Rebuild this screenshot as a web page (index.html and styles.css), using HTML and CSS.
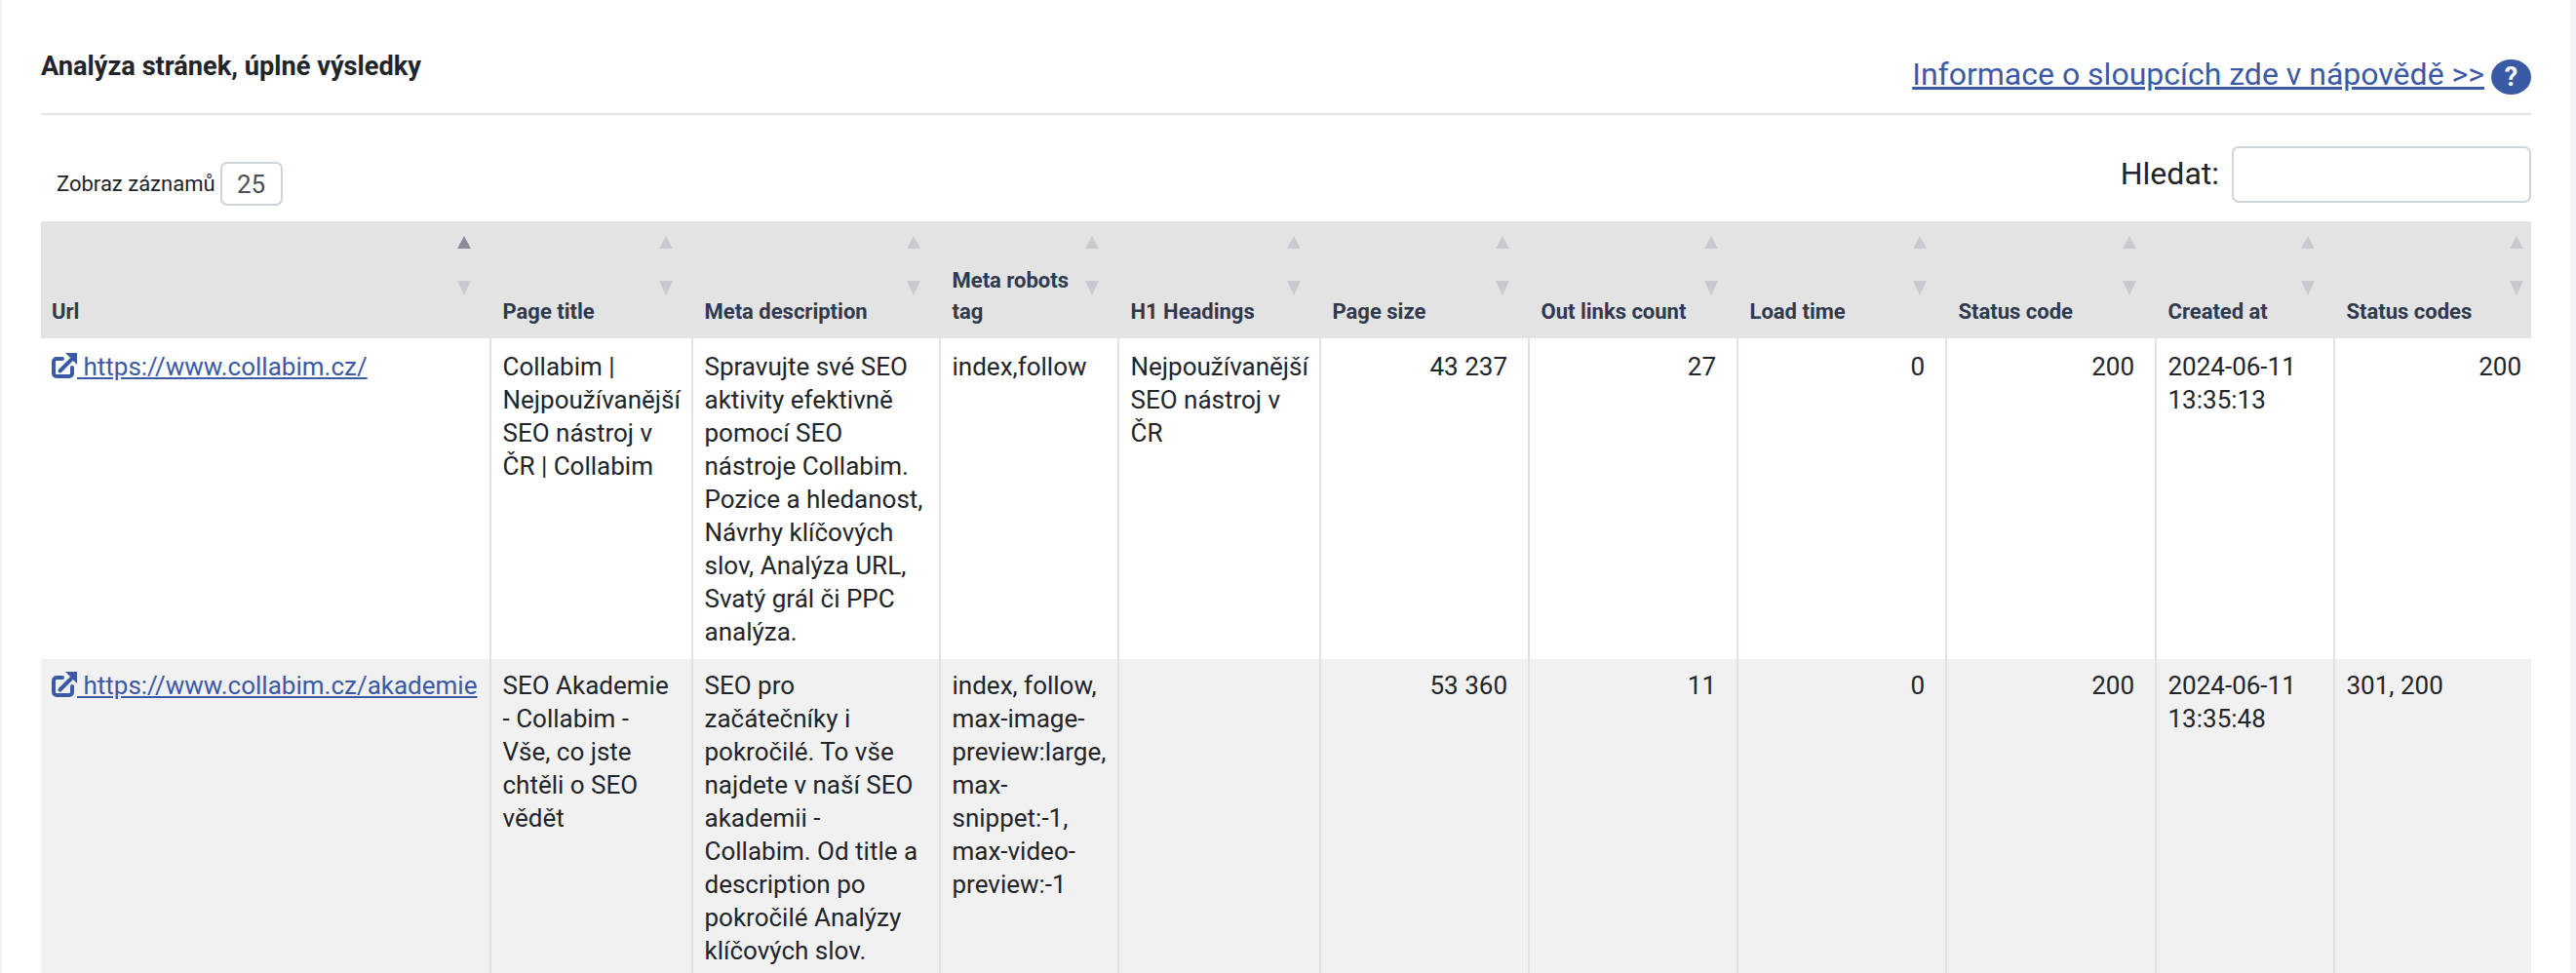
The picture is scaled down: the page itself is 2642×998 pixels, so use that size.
FILE: index.html
```html
<!DOCTYPE html>
<html lang="cs">
<head>
<meta charset="utf-8">
<title>Analýza stránek, úplné výsledky</title>
<link rel="stylesheet" href="styles.css">
</head>
<body>
<main class="card">
  <header class="head">
    <h1 class="title">Analýza stránek, úplné výsledky</h1>
    <div class="help">
      <a class="help-link" href="#">Informace o sloupcích zde v nápovědě &gt;&gt;</a>
      <span class="help-badge">?</span>
    </div>
  </header>
  <div class="toolbar">
    <label class="length">Zobraz záznamů <span class="length-box">25</span></label>
    <label class="search"><span class="search-label">Hledat:</span> <input class="search-input" type="text"></label>
  </div>
  <table class="grid">
    <colgroup>
      <col class="c-url"><col class="c-title"><col class="c-desc"><col class="c-robots"><col class="c-h1"><col class="c-size"><col class="c-size"><col class="c-size"><col class="c-status"><col class="c-robots"><col class="c-codes">
    </colgroup>
    <thead>
      <tr>
        <th class="active">Url</th>
        <th>Page title</th>
        <th>Meta description</th>
        <th>Meta robots tag</th>
        <th>H1 Headings</th>
        <th>Page size</th>
        <th>Out links count</th>
        <th>Load time</th>
        <th>Status code</th>
        <th>Created at</th>
        <th>Status codes</th>
      </tr>
    </thead>
    <tbody>
      <tr>
        <td><a class="url" href="#"><svg class="ext" viewBox="0 0 26 26" aria-hidden="true"><path d="M11 6H5a3 3 0 0 0-3 3v12a3 3 0 0 0 3 3h13a3 3 0 0 0 3-3v-6" fill="none" stroke="currentColor" stroke-width="4" stroke-linecap="round"/><path d="M8.5 18.5 20 7" fill="none" stroke="currentColor" stroke-width="4" stroke-linecap="round"/><path d="M14 0H26V12z" fill="currentColor"/></svg> https://www.collabim.cz/</a></td>
        <td>Collabim | Nejpoužívanější SEO nástroj v ČR | Collabim</td>
        <td>Spravujte své SEO aktivity efektivně pomocí SEO nástroje Collabim. Pozice a hledanost, Návrhy klíčových slov, Analýza URL, Svatý grál či PPC analýza.</td>
        <td>index,follow</td>
        <td>Nejpoužívanější SEO nástroj v ČR</td>
        <td class="num">43 237</td>
        <td class="num">27</td>
        <td class="num">0</td>
        <td class="num">200</td>
        <td>2024-06-11 13:35:13</td>
        <td class="num">200</td>
      </tr>
      <tr class="odd">
        <td><a class="url" href="#"><svg class="ext" viewBox="0 0 26 26" aria-hidden="true"><path d="M11 6H5a3 3 0 0 0-3 3v12a3 3 0 0 0 3 3h13a3 3 0 0 0 3-3v-6" fill="none" stroke="currentColor" stroke-width="4" stroke-linecap="round"/><path d="M8.5 18.5 20 7" fill="none" stroke="currentColor" stroke-width="4" stroke-linecap="round"/><path d="M14 0H26V12z" fill="currentColor"/></svg> https://www.collabim.cz/akademie</a></td>
        <td>SEO Akademie - Collabim - Vše, co jste chtěli o SEO vědět</td>
        <td>SEO pro začátečníky i pokročilé. To vše najdete v naší SEO akademii - Collabim. Od title a description po pokročilé Analýzy klíčových slov.</td>
        <td>index, follow, max-image-preview:large, max-snippet:-1, max-video-preview:-1</td>
        <td></td>
        <td class="num">53 360</td>
        <td class="num">11</td>
        <td class="num">0</td>
        <td class="num">200</td>
        <td>2024-06-11 13:35:48</td>
        <td>301, 200</td>
      </tr>
    </tbody>
  </table>
</main>
</body>
</html>
```

FILE: styles.css
```css
html, body {
  margin: 0;
  height: 998px;
  overflow: hidden;
}
body {
  background: #f3f4f9;
  font-family: Roboto, "Liberation Sans", sans-serif;
  color: #212529;
}
.card {
  margin: 0 6px 0 2px;
  padding: 0 40px;
  height: 998px;
  background: #fff;
}
.head {
  display: flex;
  justify-content: space-between;
  align-items: flex-start;
  height: 116px;
  border-bottom: 2px solid #e4e5e7;
}
.title {
  margin: 51px 0 0;
  font-size: 27.2px;
  line-height: 34px;
  font-weight: 700;
}
.help {
  display: flex;
  align-items: flex-start;
  gap: 7px;
  margin-top: 55px;
}
.help-link {
  font-size: 32px;
  line-height: 42px;
  color: #3b5aa6;
}
.help-badge {
  width: 41px;
  height: 36px;
  margin-top: 6px;
  border-radius: 50%;
  background: #3b5aa6;
  color: #fff;
  font-size: 27px;
  font-weight: 700;
  line-height: 36px;
  text-align: center;
}
.toolbar {
  display: flex;
  justify-content: space-between;
  align-items: flex-start;
  height: 109px;
}
.length {
  display: flex;
  align-items: center;
  gap: 5px;
  margin: 48px 0 0 16px;
  font-size: 22px;
}
.length-box {
  box-sizing: border-box;
  width: 64px;
  height: 45px;
  border: 2px solid #ced4da;
  border-radius: 7px;
  color: #495057;
  font-size: 26px;
  line-height: 43px;
  text-align: center;
}
.search {
  display: flex;
  align-items: center;
  gap: 13px;
  margin-top: 32px;
  font-size: 32px;
}
.search-label {
  margin-bottom: 2px;
}
.search-input {
  box-sizing: border-box;
  width: 307px;
  height: 58px;
  border: 2px solid #ced4da;
  border-radius: 7px;
  background: #fff;
}
.grid {
  width: 2554px;
  table-layout: fixed;
  border-collapse: separate;
  border-spacing: 0;
  font-size: 26px;
  line-height: 34px;
}
.c-url { width: 462px; }
.c-title { width: 207px; }
.c-desc { width: 254px; }
.c-robots { width: 183px; }
.c-h1 { width: 207px; }
.c-size { width: 214px; }
.c-status { width: 215px; }
.c-codes { width: 201px; }
.grid th {
  position: relative;
  box-sizing: border-box;
  height: 120px;
  padding: 0 32px 11px 11.5px;
  background: #e3e3e4;
  color: #2f3a4f;
  font-size: 22px;
  font-weight: 700;
  line-height: 32px;
  text-align: left;
  vertical-align: bottom;
}
.grid th:first-child {
  padding-left: 11px;
}
.grid th::before,
.grid th::after {
  content: "";
  position: absolute;
  right: 21px;
  width: 0;
  height: 0;
  border-left: 7.5px solid transparent;
  border-right: 7.5px solid transparent;
}
.grid th::before {
  top: 15px;
  border-bottom: 13px solid #c9cacf;
}
.grid th::after {
  top: 61px;
  border-top: 15px solid #c9cacf;
}
.grid th.active::before {
  border-bottom-color: #8a8e9c;
}
.grid th:last-child::before,
.grid th:last-child::after {
  right: 8px;
}
.grid td {
  padding: 10px 11px 11px 11.5px;
  border-right: 2px solid #dee2e6;
  vertical-align: top;
}
.grid tbody tr:first-child td {
  padding-top: 12px;
}
.grid td:first-child {
  padding-left: 11px;
}
.grid td:last-child {
  border-right: 0;
}
.grid td.num {
  padding-right: 21px;
  text-align: right;
}
.grid td.num:last-child {
  padding-right: 10px;
}
.odd td {
  background: #f1f1f2;
}
.url {
  color: #3b5aa6;
  white-space: nowrap;
}
.ext {
  width: 26px;
  height: 26px;
  vertical-align: -3px;
}
```
